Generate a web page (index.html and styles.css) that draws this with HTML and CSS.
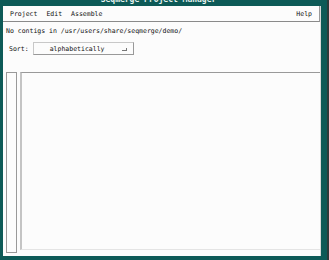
FILE: index.html
```html
<html>
<head>
<link rel="stylesheet" href="styles.css">
</head>
<body>
<div class="frame">
	<div class="titlebar"><span>Seqmerge Project Manager</span></div>
	<div class="window">
		<div class="menubar">
			<span class="menu">Project</span>
			<span class="menu">Edit</span>
			<span class="menu">Assemble</span>
			<span class="spacer"></span>
			<span class="menu">Help</span>
		</div>
		<div class="path">No contigs in /usr/users/share/seqmerge/demo/</div>
		<div class="sortrow">
			<span class="label">Sort:</span>
			<div class="dropdown">
				<span>alphabetically</span>
				<i class="mark"></i>
			</div>
		</div>
		<div class="lists">
			<div class="gutter"></div>
			<div class="contigs"></div>
		</div>
	</div>
</div>
</body>
</html>
```

FILE: styles.css
```css
body {
	margin: 0;
	background: #0d5a57;
	font-family: 'DejaVu Sans Mono', monospace;
	font-size: 6.5px;
	color: #111;
}

.frame {
	width: 329px;
	height: 260px;
	overflow: hidden;
	background: #0d5a57;
	border-right: 2px solid #2b3a3a;
	box-sizing: border-box;
}

.titlebar {
	height: 6px;
	overflow: hidden;
	text-align: center;
	padding-right: 10px;
}

.titlebar span {
	display: block;
	margin-top: -5px;
	color: #e8f2f0;
	font-size: 8px;
	line-height: 10px;
	font-weight: bold;
}

.window {
	margin: 0 6px 0 3px;
	height: 250px;
	background: #fcfcfc;
	border-right: 1px solid #d8d8d8;
	box-sizing: border-box;
}

.menubar {
	display: flex;
	align-items: center;
	height: 15px;
	padding: 0 7px;
	border-bottom: 1px solid #8a8a8a;
	border-right: 1px solid #9a9a9a;
	gap: 9px;
}

.spacer {
	flex: 1;
}

.path {
	margin-top: 5px;
	padding-left: 3px;
	line-height: 8px;
}

.sortrow {
	display: flex;
	align-items: center;
	margin-top: 7px;
	padding-left: 6px;
	gap: 4px;
}

.dropdown {
	position: relative;
	width: 101px;
	height: 13px;
	box-sizing: border-box;
	border: 1px solid #c8c8c8;
	border-right-color: #999;
	border-bottom-color: #999;
	display: flex;
	align-items: center;
	justify-content: center;
	padding-right: 12px;
}

.mark {
	position: absolute;
	right: 6px;
	top: 5px;
	width: 4px;
	height: 2px;
	border-right: 1px solid #777;
	border-bottom: 1px solid #777;
}

.lists {
	display: flex;
	margin-top: 17px;
	height: 181px;
	padding-left: 3px;
}

.gutter {
	width: 11px;
	box-sizing: border-box;
	border: 1px solid #999;
	margin-right: 3px;
}

.contigs {
	flex: 1;
	border-top: 1px solid #999;
	border-left: 2px solid #c4c4c4;
	border-bottom: 1px solid #e4e4e4;
	margin-bottom: 3px;
}
```
